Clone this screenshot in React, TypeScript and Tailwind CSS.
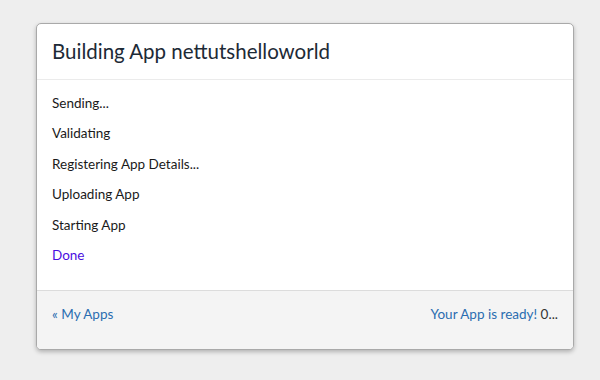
export default function App() {
  const steps = ['Sending...', 'Validating', 'Registering App Details...', 'Uploading App', 'Starting App'];

  return (
    <div className="w-[600px] h-[380px] bg-[#eeeeee] pt-[23px] font-['Lato',sans-serif]">
      <div className="ml-[36px] w-[538px] h-[327px] flex flex-col bg-white border border-[#a9a9a9] rounded-[5px] shadow-[0_2px_4px_rgba(0,0,0,0.25)] overflow-hidden">
        <div className="h-[56px] flex items-center px-[15px] border-b border-[#ebebeb]">
          <h1 className="text-[20.5px] text-[#1d2a36]">Building App nettutshelloworld</h1>
        </div>
        <div className="flex-1 px-[15px] pt-[8px]">
          {steps.map((s) => (
            <div key={s} className="h-[30.4px] flex items-center text-[13.5px] text-[#1a1a1a]">
              {s}
            </div>
          ))}
          <div className="h-[30.4px] flex items-center text-[13.5px] text-[#4a0ee0]">Done</div>
        </div>
        <div className="h-[59px] bg-[#f4f4f4] border-t border-[#dcdcdc] flex justify-between px-[15px] pt-[13px] text-[13.5px]">
          <a className="text-[#2a6db0]">« My Apps</a>
          <span>
            <a className="text-[#2a6db0]">Your App is ready!</a>{' '}
            <span className="text-[#333]">0...</span>
          </span>
        </div>
      </div>
    </div>
  );
}
